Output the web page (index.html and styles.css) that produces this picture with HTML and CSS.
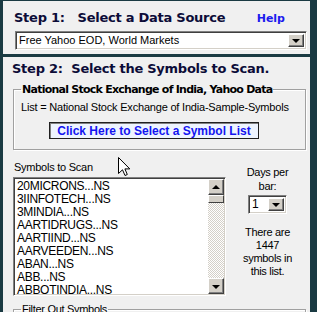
FILE: index.html
```html
<!DOCTYPE html>
<html lang="en">
<head>
    <meta charset="UTF-8">
    <title>Scan Setup</title>
    <link rel="stylesheet" href="styles.css">
</head>
<body>
    <div class="panel step1">
        <div class="step-head">
            <h1>Step 1:&nbsp;&nbsp; Select a Data Source</h1>
            <a class="help" href="#">Help</a>
        </div>
        <div class="combo source-combo">
            <span class="combo-text">Free Yahoo EOD, World Markets</span>
            <span class="drop-btn"><span class="arrow-down"></span></span>
        </div>
    </div>

    <div class="panel step2">
        <h1>Step 2:&nbsp; Select the Symbols to Scan.</h1>

        <fieldset class="group">
            <legend class="bold-legend">National Stock Exchange of India, Yahoo Data</legend>
            <p class="list-name">List = National Stock Exchange of India-Sample-Symbols</p>
            <button class="pick-button">Click Here to Select a Symbol List</button>
        </fieldset>

        <div class="symbols-row">
            <div class="symbols">
                <div class="label">Symbols to Scan</div>
                <div class="listbox">
                    <ul class="items">
                        <li>20MICRONS...NS</li>
                        <li>3IINFOTECH...NS</li>
                        <li>3MINDIA...NS</li>
                        <li>AARTIDRUGS...NS</li>
                        <li>AARTIIND...NS</li>
                        <li>AARVEEDEN...NS</li>
                        <li>ABAN...NS</li>
                        <li>ABB...NS</li>
                        <li>ABBOTINDIA...NS</li>
                    </ul>
                    <div class="scrollbar">
                        <span class="scroll-btn"><span class="arrow-up"></span></span>
                        <span class="thumb"></span>
                        <span class="track"></span>
                        <span class="scroll-btn"><span class="arrow-down"></span></span>
                    </div>
                </div>
            </div>

            <div class="side">
                <div class="days-label">Days per<br>bar:</div>
                <div class="combo days-combo">
                    <span class="combo-text">1</span>
                    <span class="drop-btn"><span class="arrow-down"></span></span>
                </div>
                <p class="count">There are<br>1447<br>symbols in<br>this list.</p>
            </div>
        </div>

        <fieldset class="group filter">
            <legend>Filter Out Symbols</legend>
        </fieldset>
    </div>

    <!-- mouse pointer over the window -->
    <svg class="cursor" width="13" height="20" viewBox="0 0 13 20">
        <path d="M0.5 0.5 L0.5 16.5 L4.5 12.8 L7 18.5 L9.3 17.5 L6.9 11.9 L11.8 11.9 Z" fill="#fff" stroke="#000" stroke-width="1"/>
    </svg>
</body>
</html>
```

FILE: styles.css
```css
body {
    margin: 0;
    padding: 1px 7px 0 3px;
    background-color: #1a3a42;
    font-family: 'Liberation Sans', Arial, sans-serif;
    font-size: 11px;
    color: #000;
    height: 312px;
    box-sizing: border-box;
    overflow: hidden;
    position: relative;
}

.panel {
    background-color: #f0f0f0;
}

h1 {
    margin: 0;
    font: bold 13px/16px 'DejaVu Sans', Verdana, sans-serif;
    letter-spacing: -0.25px;
    color: #0c0c38;
    white-space: nowrap;
}

/* step 1 */
.step1 {
    height: 53px;
    padding: 9px 3px 0 11px;
    box-sizing: border-box;
}

.step-head {
    display: flex;
    align-items: baseline;
}

.help {
    margin-left: auto;
    margin-right: 22px;
    font: bold 11px 'DejaVu Sans', Verdana, sans-serif;
    color: #1b1bee;
    text-decoration: none;
}

.combo {
    display: flex;
    background-color: #fff;
    border: 1px solid;
    border-color: #808080 #fff #fff #808080;
    box-shadow: inset 1px 1px 0 #404040, inset -1px -1px 0 #d4d0c8;
    box-sizing: border-box;
    padding: 2px;
}

.combo-text {
    flex: 1;
    padding-left: 1px;
    line-height: 13px;
    white-space: nowrap;
}

.source-combo {
    margin: 5px 0 0 1px;
    height: 19px;
    font-size: 11px;
}

.drop-btn {
    width: 16px;
    background-color: #d4d0c8;
    border: 1px solid;
    border-color: #fff #404040 #404040 #fff;
    box-shadow: inset -1px -1px 0 #808080;
    box-sizing: border-box;
    display: flex;
    align-items: center;
    justify-content: center;
}

.arrow-down, .arrow-up {
    width: 0;
    height: 0;
    border-left: 4px solid transparent;
    border-right: 4px solid transparent;
}

.arrow-down {
    border-top: 4px solid #000;
    margin-top: 1px;
}

.arrow-up {
    border-bottom: 4px solid #000;
    margin-bottom: 1px;
}

/* step 2 */
.step2 {
    margin-top: 3px;
    padding: 4px 4px 0 10px;
    height: 255px;
    overflow: hidden;
}

.step2 h1 {
    margin-left: -1px;
}

.group {
    margin: 6px 0 0 0;
    padding: 0 6px 10px 7px;
    border: 1px solid #a0a0a0;
    box-shadow: 1px 1px 0 #fff, inset 1px 1px 0 #fff;
}

.group legend {
    padding: 0 1px;
    line-height: 13px;
    white-space: nowrap;
}

.bold-legend {
    font: bold 11px/13px 'DejaVu Sans', Verdana, sans-serif;
    letter-spacing: -0.75px;
    color: #000;
}

.list-name {
    margin: 5px 0 0 0;
    line-height: 13px;
    letter-spacing: -0.2px;
    white-space: nowrap;
}

.pick-button {
    display: block;
    margin: 8px 0 0 28px;
    width: 210px;
    height: 17px;
    padding: 0;
    background-color: #eef4ff;
    border: 1px solid #202020;
    box-shadow: inset 1px 1px 0 #808080;
    color: #1414f0;
    font: bold 12px/14px 'Liberation Sans', Arial, sans-serif;
    cursor: pointer;
}

.symbols-row {
    display: flex;
    margin-top: 11px;
}

.symbols {
    width: 213px;
}

.label {
    line-height: 13px;
    letter-spacing: -0.25px;
    margin-left: 1px;
}

.listbox {
    margin-top: 3px;
    height: 119px;
    display: flex;
    background-color: #fff;
    border: 1px solid;
    border-color: #808080 #fff #fff #808080;
    box-shadow: inset 1px 1px 0 #404040, inset -1px -1px 0 #d4d0c8;
    padding: 1px;
    box-sizing: border-box;
}

.items {
    flex: 1;
    list-style: none;
    margin: 0;
    padding: 1px 0 0 2px;
    font-size: 12px;
    line-height: 13px;
    letter-spacing: -0.3px;
    overflow: hidden;
}

.scrollbar {
    width: 16px;
    display: flex;
    flex-direction: column;
}

.scroll-btn {
    height: 16px;
    flex: none;
    background-color: #d4d0c8;
    border: 1px solid;
    border-color: #fff #404040 #404040 #fff;
    box-shadow: inset -1px -1px 0 #808080;
    box-sizing: border-box;
    display: flex;
    align-items: center;
    justify-content: center;
}

.thumb {
    height: 8px;
    flex: none;
    background-color: #d4d0c8;
    border: 1px solid;
    border-color: #fff #404040 #404040 #fff;
    box-sizing: border-box;
}

.track {
    flex: 1;
    background: repeating-conic-gradient(#d4d0c8 0 25%, #fff 0 50%) 0 0 / 2px 2px;
}

.side {
    flex: 1;
    text-align: center;
    padding-top: 4px;
    letter-spacing: -0.3px;
    padding-left: 3px;
}

.days-label {
    line-height: 14px;
}

.days-combo {
    width: 39px;
    height: 19px;
    margin: 2px auto 0 auto;
    font-size: 12px;
    text-align: left;
}

.count {
    margin: 12px 0 0 0;
    line-height: 13px;
}

.filter {
    margin-top: 7px;
    height: 20px;
    padding-left: 7px;
}

.filter legend {
    letter-spacing: -0.3px;
}

.cursor {
    position: absolute;
    left: 118px;
    top: 157px;
}
```
